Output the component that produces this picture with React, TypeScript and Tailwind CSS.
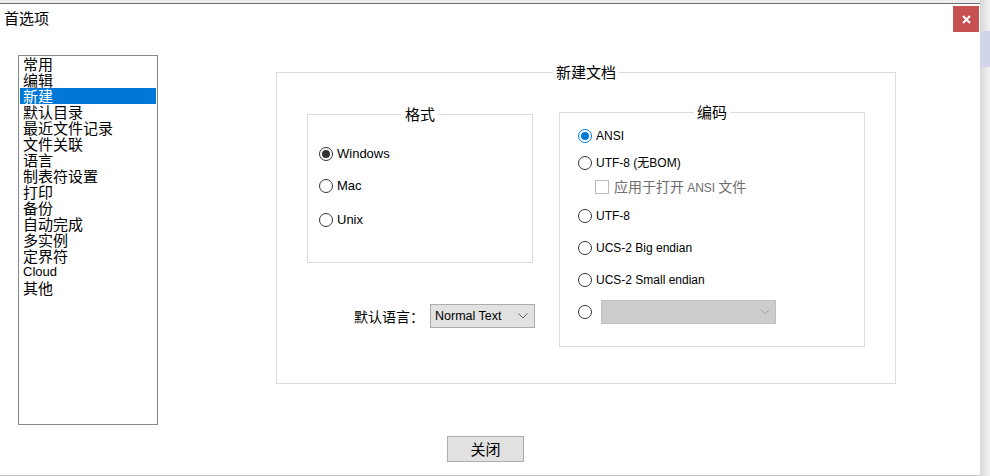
import React from 'react';

const cjk = { fontFamily: '"Noto Sans CJK SC", "Liberation Sans", sans-serif' };
const latin = { fontFamily: '"Liberation Sans", "Noto Sans CJK SC", sans-serif' };

const pages = ['常用', '编辑', '新建', '默认目录', '最近文件记录', '文件关联', '语言', '制表符设置', '打印', '备份', '自动完成', '多实例', '定界符', 'Cloud', '其他'];

// Group box with its caption sitting over the top border
const GroupBox: React.FC<{ title: string; className: string; children?: React.ReactNode }> = ({ title, className, children }) => (
    <div className={`relative border border-[#dcdcdc] ${className}`}>
        <span
            className="absolute -top-[9px] left-1/2 -translate-x-1/2 bg-white px-[3px] text-[15px] leading-[16px] text-black whitespace-nowrap"
            style={cjk}
        >
            {title}
        </span>
        {children}
    </div>
);

const Radio: React.FC<{ checked?: 'dark' | 'blue' }> = ({ checked }) => {
    if (checked === 'blue') {
        return (
            <span className="flex h-[14px] w-[14px] shrink-0 items-center justify-center rounded-full border border-[#0078d7]">
                <span className="h-[8px] w-[8px] rounded-full bg-[#0078d7]" />
            </span>
        );
    }
    return (
        <span className="flex h-[14px] w-[14px] shrink-0 items-center justify-center rounded-full border border-[#333333]">
            {checked === 'dark' && <span className="h-[8px] w-[8px] rounded-full bg-[#333333]" />}
        </span>
    );
};

const RadioRow: React.FC<{ label: string; checked?: 'dark' | 'blue'; size: string; className?: string }> = ({ label, checked, size, className }) => (
    <div className={`flex h-[20px] items-center gap-[4px] ${className ?? ''}`}>
        <Radio checked={checked} />
        <span className={`${size} text-black whitespace-nowrap`} style={latin}>{label}</span>
    </div>
);

const Chevron: React.FC<{ color: string }> = ({ color }) => (
    <svg width="10" height="6" viewBox="0 0 10 6" fill="none">
        <path d="M0.5 0.5 L5 5 L9.5 0.5" stroke={color} strokeWidth="1" />
    </svg>
);

export default function App() {
    return (
        <div className="flex h-[476px] w-[990px] bg-[#ececec] overflow-hidden">
            {/* Dialog window */}
            <div className="mt-[3px] flex h-[473px] w-[980px] flex-col border-t border-b border-[#6e6e6e] border-b-[#c9c9c9] bg-white">
                {/* Title bar */}
                <div className="flex h-[31px] items-start justify-between">
                    <span className="ml-[4px] mt-[6px] text-[15px] leading-[16px] text-black" style={cjk}>首选项</span>
                    <button className="mt-[2px] mr-[1px] flex h-[26px] w-[26px] items-center justify-center bg-[#c75050]">
                        <svg width="9" height="9" viewBox="0 0 9 9">
                            <path d="M1 1 L8 8 M8 1 L1 8" stroke="white" strokeWidth="2" />
                        </svg>
                    </button>
                </div>

                {/* Body */}
                <div className="flex flex-1">
                    {/* Page list */}
                    <div className="ml-[18px] mt-[20px] h-[370px] w-[140px] border border-[#828790] px-[1px]">
                        {pages.map((p) => (
                            <div
                                key={p}
                                className={`h-[16px] pl-[3px] leading-[16px] whitespace-nowrap ${p === 'Cloud' ? 'text-[13px]' : 'text-[15px]'} ${p === '新建' ? 'bg-[#0078d7] text-white' : 'text-black'}`}
                                style={p === 'Cloud' ? latin : cjk}
                            >
                                {p}
                            </div>
                        ))}
                    </div>

                    {/* Settings area */}
                    <div className="ml-[118px] flex flex-col items-start">
                        <GroupBox title="新建文档" className="mt-[37px] h-[312px] w-[620px]">
                            <div className="flex items-start px-[30px]">
                                {/* Left column */}
                                <div className="flex w-[226px] flex-col">
                                    <GroupBox title="格式" className="mt-[41px] h-[149px] w-[226px]">
                                        <div className="flex flex-col pl-[11px] pt-[29px]">
                                            <RadioRow label="Windows" checked="dark" size="text-[13px]" />
                                            <RadioRow label="Mac" size="text-[13px]" className="mt-[12px]" />
                                            <RadioRow label="Unix" size="text-[13px]" className="mt-[14px]" />
                                        </div>
                                    </GroupBox>
                                    <div className="mt-[41px] flex items-center pl-[47px]">
                                        <span className="text-[14px] leading-[16px] text-black whitespace-nowrap" style={cjk}>默认语言：</span>
                                        <div className="ml-[6px] flex h-[24px] w-[105px] shrink-0 items-center justify-between border border-[#adadad] bg-[#e1e1e1] pl-[4px] pr-[6px]">
                                            <span className="text-[12.5px] text-black" style={latin}>Normal Text</span>
                                            <Chevron color="#606060" />
                                        </div>
                                    </div>
                                </div>

                                {/* Right column */}
                                <GroupBox title="编码" className="ml-[26px] mt-[39px] h-[235px] w-[306px]">
                                    <div className="flex flex-col pl-[18px] pt-[13px]">
                                        <RadioRow label="ANSI" checked="blue" size="text-[12px]" />
                                        <RadioRow label="UTF-8 (无BOM)" size="text-[12px]" className="mt-[7px]" />
                                        <div className="mt-[4px] flex h-[20px] items-center gap-[5px] pl-[17px]">
                                            <span className="h-[14px] w-[14px] shrink-0 border border-[#bcbcbc]" />
                                            <span className="text-[14px] leading-[16px] text-[#6d6d6d] whitespace-nowrap" style={cjk}>
                                                应用于打开 <span className="text-[12px]" style={latin}>ANSI</span> 文件
                                            </span>
                                        </div>
                                        <RadioRow label="UTF-8" size="text-[12px]" className="mt-[9px]" />
                                        <RadioRow label="UCS-2 Big endian" size="text-[12px]" className="mt-[12px]" />
                                        <RadioRow label="UCS-2 Small endian" size="text-[12px]" className="mt-[12px]" />
                                        <div className="mt-[10px] flex h-[24px] items-center gap-[9px]">
                                            <Radio />
                                            <div className="flex h-[24px] w-[175px] items-center justify-end border border-[#bfbfbf] bg-[#cccccc] pr-[5px]">
                                                <Chevron color="#a8a8a8" />
                                            </div>
                                        </div>
                                    </div>
                                </GroupBox>
                            </div>
                        </GroupBox>

                        <button
                            className="ml-[171px] mt-[52px] flex h-[26px] w-[77px] items-center justify-center border border-[#adadad] bg-[#e1e1e1] text-[15px] leading-[16px] text-black"
                            style={cjk}
                        >
                            关闭
                        </button>
                    </div>
                </div>
            </div>

            {/* Background app peeking at the right */}
            <div className="flex w-[10px] flex-col bg-gradient-to-r from-[#d8d8d8] to-[#f2f2f2]">
                <div className="h-[31px]" />
                <div className="h-[36px] bg-[#d2d4ea]" />
            </div>
        </div>
    );
}
